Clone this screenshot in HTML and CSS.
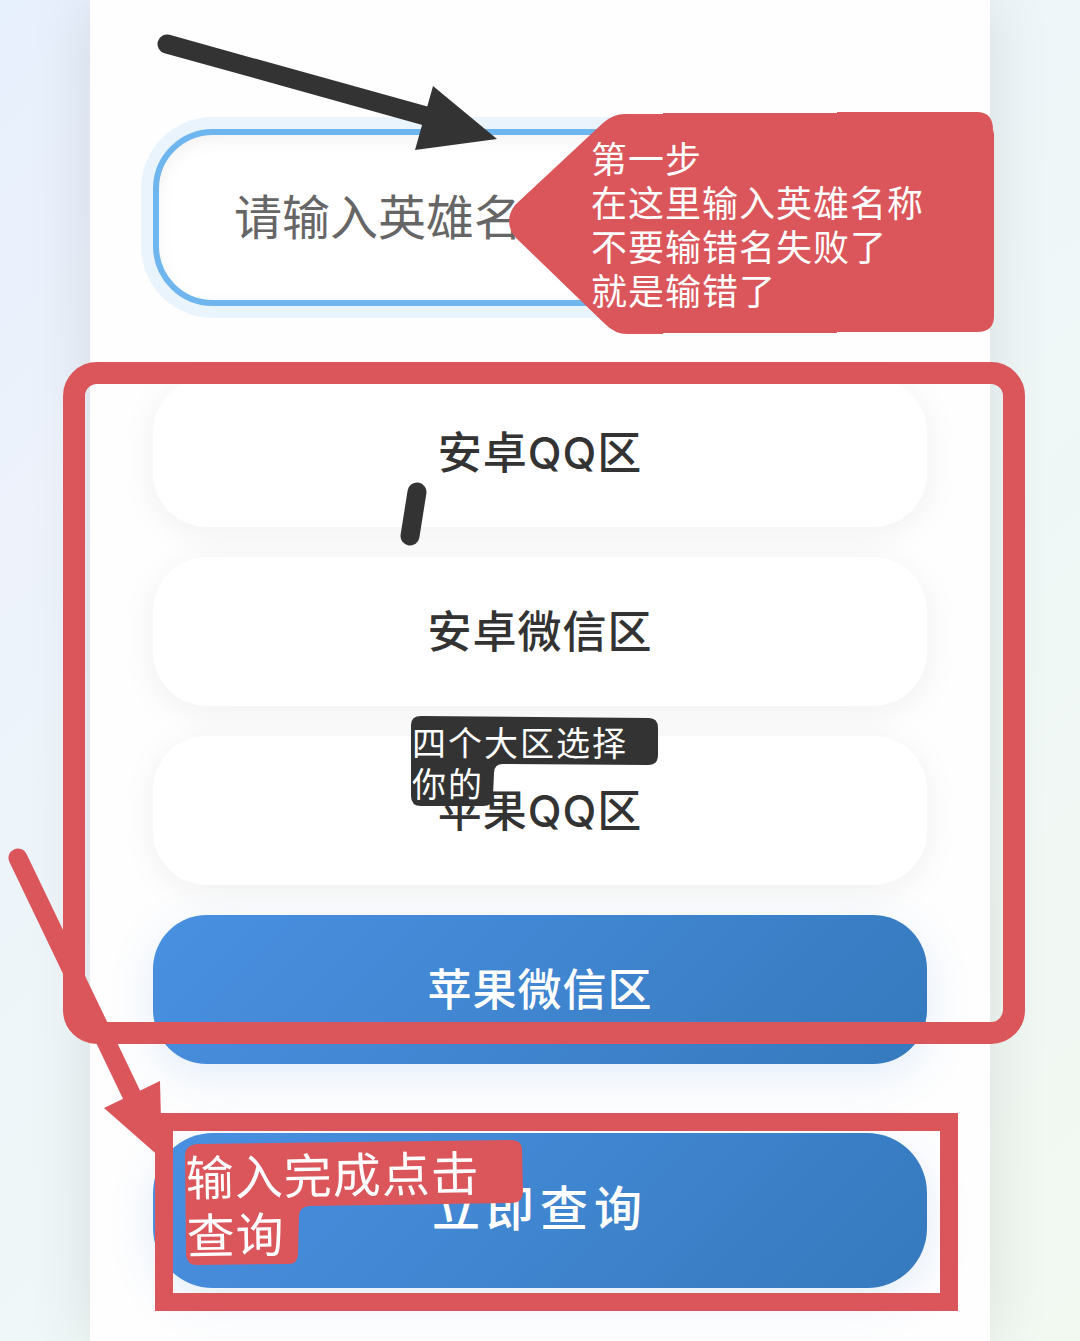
FILE: index.html
```html
<!DOCTYPE html>
<html lang="zh-CN">
<head>
<meta charset="utf-8">
<meta name="viewport" content="width=device-width, initial-scale=1">
<title>英雄查询</title>
<link rel="stylesheet" href="styles.css">
</head>
<body>
<main class="panel">
  <form class="form">
    <div class="field">
      <input class="hero-input" type="text" aria-label="英雄名称" placeholder="请输入英雄名称">
      <svg class="arrow-top" viewBox="0 0 342 118" aria-hidden="true">
        <path class="stroke-dark" d="M12 10 L278 84"/>
        <path class="fill-dark" d="M278 52 L342 105 L260 116 Z"/>
      </svg>
      <div class="callout">
        <svg class="callout-shape" viewBox="0 0 485 222" aria-hidden="true">
          <path class="fill-red" d="M6 93 L94 11 Q104 2 116 2 L154 2 V1 H328 V0 H468 Q484 0 484 18 L485 22 V204 Q485 220 468 220 H328 V221 H154 V222 H118 Q106 222 96 212 L6 125 Q-6 109 6 93 Z"/>
        </svg>
        <p class="callout-text">第一步<br>在这里输入英雄名称<br>不要输错名失败了<br>就是输错了</p>
      </div>
    </div>

    <div class="zones">
      <button class="zone" type="button">安卓QQ区</button>
      <button class="zone" type="button">安卓微信区</button>
      <button class="zone" type="button">苹果QQ区</button>
      <button class="zone zone-active" type="button">苹果微信区</button>
      <div class="zones-frame"></div>
      <svg class="dash" viewBox="0 0 28 64" aria-hidden="true">
        <path class="stroke-dark" d="M17 10 L10 54"/>
      </svg>
      <div class="note">
        <svg class="note-shape" viewBox="0 0 248 91" aria-hidden="true">
          <path class="fill-dark" d="M10 0 L238 2 Q247 2 247 12 L247 39 Q247 49 237 49 L92 48 Q83 48 83 57 L82 80 Q82 90 72 90 L10 90 Q0 90 0 80 L0 9 Q0 0 10 0 Z"/>
        </svg>
        <p class="note-text">四个大区选择<br>你的</p>
      </div>
    </div>

    <div class="submit">
      <button class="query" type="submit">立即查询</button>
      <div class="submit-frame"></div>
      <svg class="arrow-bottom" viewBox="0 0 160 312" aria-hidden="true">
        <path class="stroke-red" d="M10 10 L128 256"/>
        <path class="fill-red" d="M96 260 L152 233 L154 311 Z"/>
      </svg>
      <div class="label">
        <svg class="label-shape" viewBox="0 0 338 126" aria-hidden="true">
          <path class="fill-red" d="M12 4 L326 0 Q337 0 337 10 L338 52 Q338 62 328 63 L124 66 Q114 67 114 76 L113 114 Q113 124 103 124 L12 125 Q2 125 1 115 L0 16 Q0 5 12 4 Z"/>
        </svg>
        <p class="label-text">输入完成点击<br>查询</p>
      </div>
    </div>
  </form>
</main>
</body>
</html>
```
FILE: styles.css
```css
* { box-sizing: border-box; }

body {
  margin: 0;
  min-height: 100vh;
  overflow-x: hidden;
  font-family: "Noto Sans CJK SC", sans-serif;
  background: linear-gradient(135deg, #e7f0fd 0%, #edf2fb 22%, #eef6f9 45%, #f2f9f1 100%);
}

.panel {
  min-height: 100vh;
  margin: 0 90px;
  padding: 129px 63px 53px;
  background: #fefefe;
  box-shadow: 0 0 60px rgba(20, 16, 0, 0.1);
}

.form { display: flex; flex-direction: column; }

.field, .zones, .submit { position: relative; }

.hero-input {
  display: block;
  width: 100%;
  height: 177px;
  padding: 0 75px 8px;
  border: 6px solid #6fb5ee;
  border-radius: 60px;
  background: #fff;
  box-shadow: 0 0 0 12px #e9f4fd, inset 0 6px 18px rgba(0, 0, 0, 0.05);
  color: #333;
  font: 400 48px "Noto Sans CJK SC", sans-serif;
}
.hero-input::placeholder { color: #666; opacity: 1; }

.zones {
  display: flex;
  flex-direction: column;
  gap: 30px;
  margin-top: 72px;
}

.zone, .query {
  width: 100%;
  padding: 0 0 6px;
  border: 0;
  border-radius: 54px;
  background: #fff;
  color: #333;
  font: 500 44px Inter, "Noto Sans CJK SC", sans-serif;
}
.zone {
  height: 149px;
  letter-spacing: 1px;
  box-shadow: 0 6px 36px rgba(0, 0, 0, 0.06);
}
.zone-active, .query {
  background: linear-gradient(135deg, #4a90e2, #357abd);
  color: #fff;
  box-shadow: 0 12px 45px rgba(74, 144, 226, 0.15);
}

.submit { margin-top: 69px; }
.query {
  display: block;
  height: 155px;
  padding-bottom: 12px;
  border-radius: 60px;
  font-size: 48px;
  letter-spacing: 6px;
}

/* Tutorial marks laid over the form */
.zones-frame, .submit-frame, .arrow-top, .arrow-bottom, .dash,
.callout, .note, .label { position: absolute; pointer-events: none; }

.zones-frame {
  inset: -16px -98px 20px -90px;
  border: 22px solid #db565b;
  border-radius: 34px;
}
.submit-frame {
  inset: -20px -31px -23px 2px;
  border: 18px solid #db565b;
}

.fill-dark { fill: #333; }
.fill-red { fill: #db565b; }
.stroke-dark, .stroke-red { fill: none; stroke-width: 19px; stroke-linecap: round; }
.stroke-dark { stroke: #333; }
.stroke-red { stroke: #db565b; }

.arrow-top { left: 2px; top: -95px; width: 342px; height: 118px; }
.arrow-bottom { left: -145px; top: -285px; width: 160px; height: 312px; }
.dash { left: 247px; top: 104px; width: 28px; height: 64px; }

.callout { right: -67px; top: -17px; width: 485px; height: 222px; }
.note { left: 258px; top: 338px; width: 248px; height: 91px; }
.label { left: 32px; top: 7px; width: 338px; height: 126px; }
.callout-shape, .note-shape, .label-shape { position: absolute; inset: 0; width: 100%; height: 100%; }

.callout-text, .note-text, .label-text {
  position: relative;
  margin: 0;
  color: #fff;
  white-space: nowrap;
}
.callout-text {
  padding: 23px 0 0 82px;
  font-size: 36px;
  line-height: 44px;
  letter-spacing: 1px;
}
.note-text {
  padding: 5px 0 0 1px;
  font-size: 34px;
  line-height: 41px;
  letter-spacing: 2px;
}
.label-text {
  padding: 3px 0 0 1px;
  font-size: 48px;
  line-height: 58px;
  letter-spacing: 1px;
  transform: rotate(-1deg);
}
```
